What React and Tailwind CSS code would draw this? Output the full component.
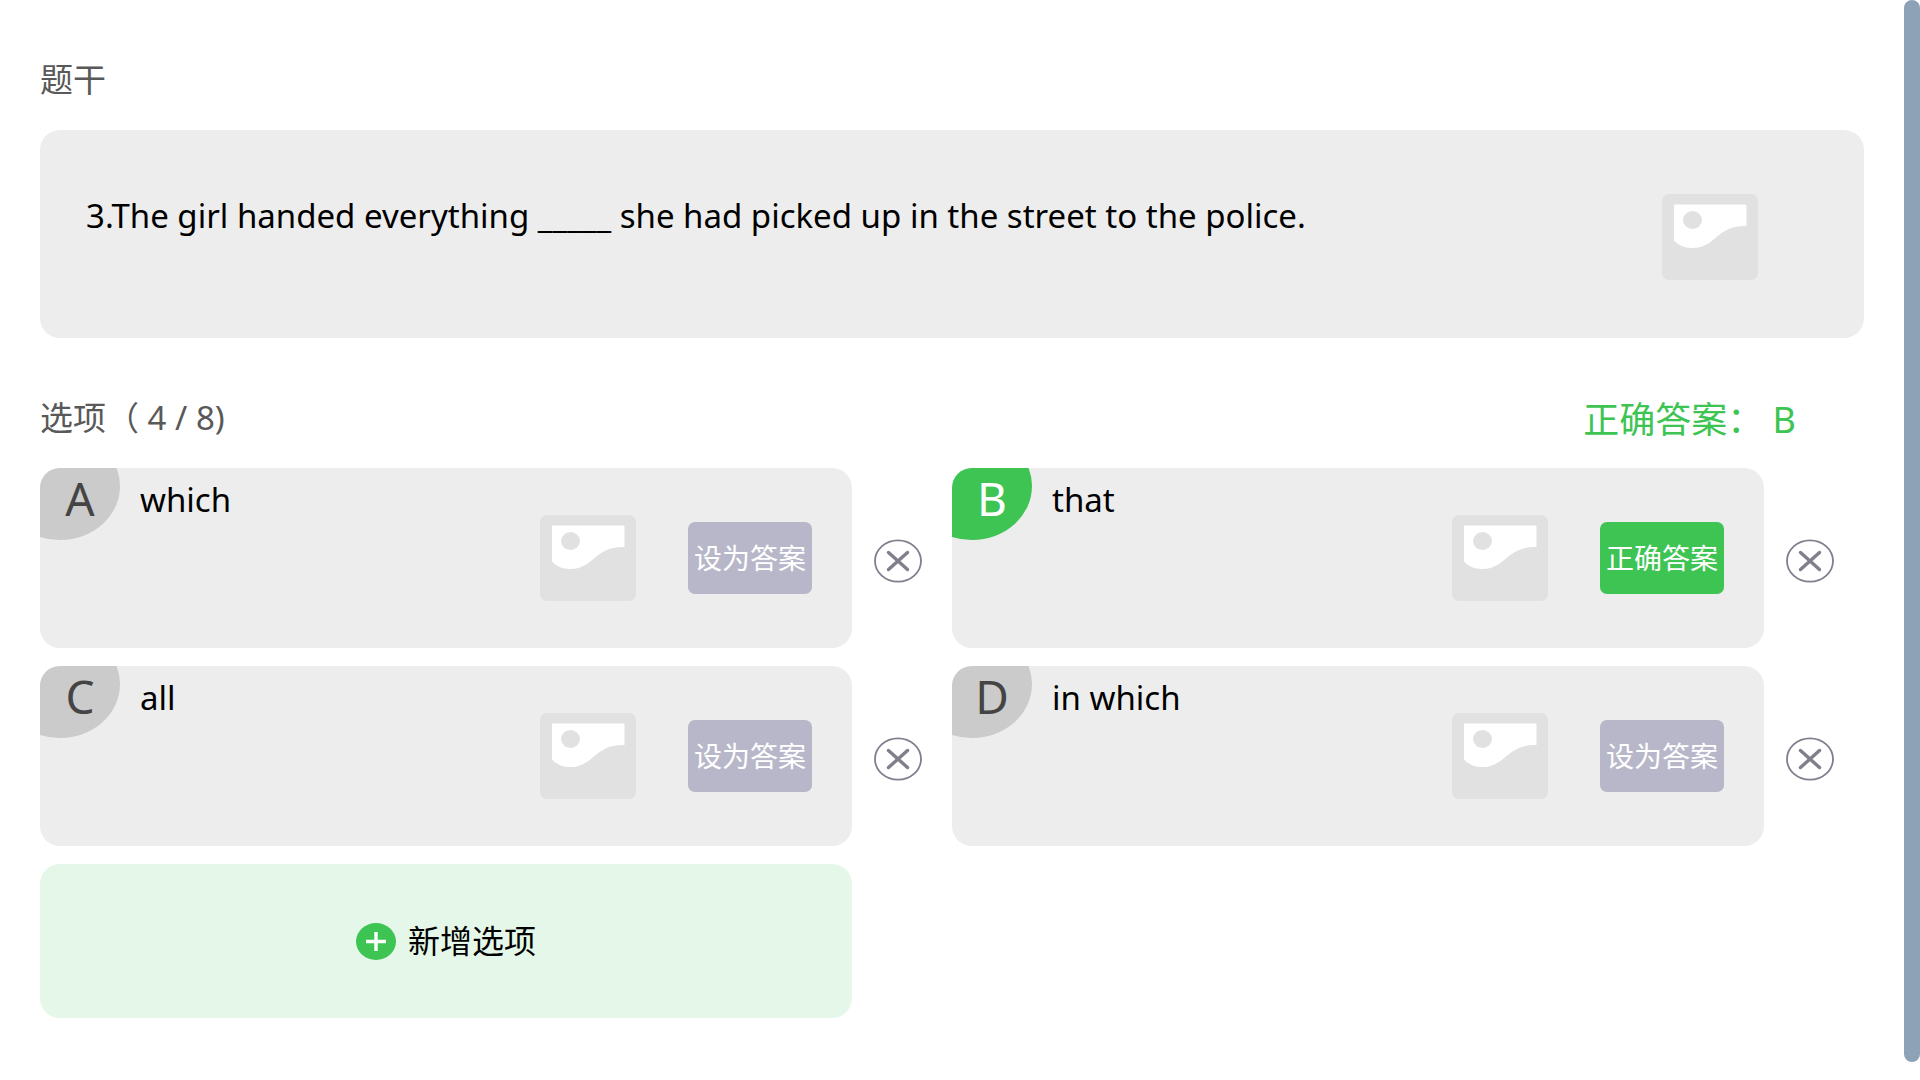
import React from "react";

const options = [
    { letter: "A", text: "which", correct: false },
    { letter: "B", text: "that", correct: true },
    { letter: "C", text: "all", correct: false },
    { letter: "D", text: "in which", correct: false },
];

const ImageButton = () => (
    <button type="button" aria-label="上传图片" className="h-[86px] w-24 shrink-0">
        <svg viewBox="0 0 96 86" className="h-full w-full">
            <rect width="96" height="86" rx="7" fill="#e1e1e1" />
            <path
                d="M13 10.5H83a1.5 1.5 0 0 1 1.5 1.5V32C74 31.500 66 34 57 41C49 47.500 43 54 30 54C22 54 16 51 12 46.500V12A1.500 1.500 0 0 1 13 10.500Z"
                fill="#fff"
            />
            <ellipse cx="30.500" cy="26" rx="9.500" ry="9" fill="#e1e1e1" />
        </svg>
    </button>
);

const DeleteButton = ({ letter }) => (
    <button type="button" aria-label={`删除选项 ${letter}`} className="mt-1.5 h-11 w-12 shrink-0">
        <svg viewBox="0 0 48 44" className="h-full w-full" fill="none" stroke="#7f7f8e">
            <ellipse cx="24" cy="22" rx="23" ry="20.700" strokeWidth="1.800" />
            <path d="M14.500 13.500L33.500 30.500M33.500 13.500L14.500 30.500" strokeWidth="3.400" strokeLinecap="round" />
        </svg>
    </button>
);

const OptionCard = ({ option }) => (
    <li className="flex items-center gap-[22px] pr-[30px]">
        <div className="flex h-[180px] min-w-0 flex-1 items-center rounded-[20px] bg-[#ededed] pr-10">
            {/* Corner badge, an ellipse clipped by the card's corner */}
            <div className="relative h-[72px] w-20 shrink-0 self-start text-center">
                <div className="absolute inset-0 overflow-hidden rounded-tl-[20px]">
                    <div
                        className={`absolute -left-10 -top-9 h-[108px] w-[120px] rounded-[50%] ${
                            option.correct ? "bg-[#3dc453]" : "bg-[#cbcbcb]"
                        }`}
                    ></div>
                </div>
                <span
                    className={`relative block text-[46px] leading-[60px] ${
                        option.correct ? "text-white" : "text-[#444444]"
                    }`}
                >
                    {option.letter}
                </span>
            </div>
            <p className="min-w-0 flex-1 self-start pl-5 pt-2.5 text-[33px] leading-[44px] text-black">{option.text}</p>
            <ImageButton />
            <button
                type="button"
                className={`ml-[52px] h-[72px] w-[124px] shrink-0 whitespace-nowrap rounded-[7px] text-[28px] leading-[44px] text-white ${
                    option.correct ? "bg-[#3dc453]" : "bg-[#b8b7c9]"
                }`}
            >
                {option.correct ? "正确答案" : "设为答案"}
            </button>
        </div>
        <DeleteButton letter={option.letter} />
    </li>
);

const App = () => {
    const answer = options.find((option) => option.correct);

    return (
        <div className="flex min-h-screen items-start bg-white font-['Noto_Sans','Noto_Sans_CJK_SC',sans-serif]">
            <main className="min-w-0 flex-1 pl-10 pr-10 pt-[58px]">
                {/* Question stem */}
                <h2 className="text-[33px] leading-[44px] text-[#595959]">题干</h2>
                <section className="mt-7 flex h-[208px] items-start rounded-[20px] bg-[#ededed] pl-[46px] pr-[106px] pt-16">
                    <p className="min-w-0 flex-1 text-[33px] leading-[44px] text-black">
                        3.The girl handed everything _____ she had picked up in the street to the police.
                    </p>
                    <ImageButton />
                </section>

                {/* Options */}
                <div className="mt-[58px] flex items-start justify-between pr-[68px]">
                    <h2 className="text-[33px] leading-[44px] text-[#595959]">选项（ 4 / 8)</h2>
                    <p className="text-[36px] leading-[48px] text-[#3dc453]">正确答案： {answer.letter}</p>
                </div>
                <ul className="mt-6 grid grid-cols-2 gap-y-[18px]">
                    {options.map((option) => (
                        <OptionCard key={option.letter} option={option} />
                    ))}
                    <li className="pr-[100px]">
                        <button
                            type="button"
                            className="flex h-[154px] w-full items-center justify-center gap-3 rounded-[20px] bg-[#e4f7e8] text-[32px] leading-[44px] text-black"
                        >
                            <svg viewBox="0 0 40 37" className="h-[37px] w-10">
                                <ellipse cx="20" cy="18.500" rx="20" ry="18.500" fill="#3dc453" />
                                <path d="M10 18.500H30M20 9V28" stroke="#fff" strokeWidth="3.400" />
                            </svg>
                            新增选项
                        </button>
                    </li>
                </ul>
            </main>

            {/* Scroll bar */}
            <div className="h-screen w-4 shrink-0 pb-[18px]">
                <div className="h-full rounded-full bg-[#8da1b7]"></div>
            </div>
        </div>
    );
};

export default App;
